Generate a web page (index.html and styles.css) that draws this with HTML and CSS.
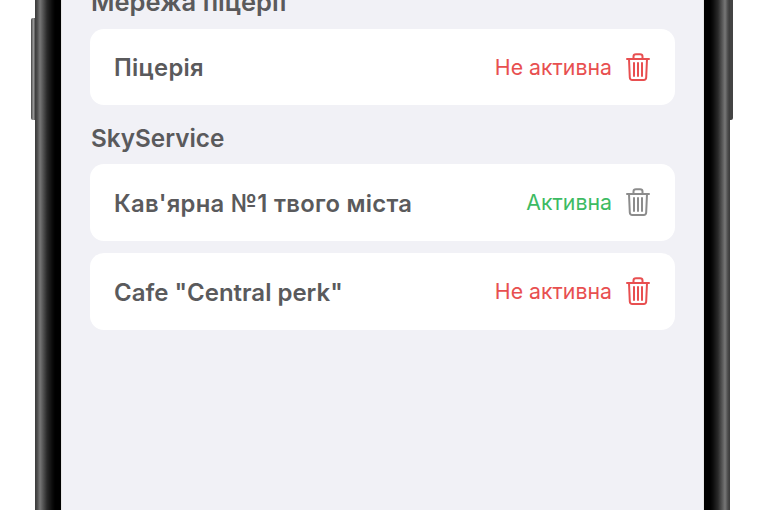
FILE: index.html
```html
<!DOCTYPE html>
<html lang="uk">
<head>
  <meta charset="UTF-8" />
  <title>Мережі</title>
  <link rel="stylesheet" href="styles.css">
</head>
<body>
  <svg width="0" height="0" class="defs">
    <symbol id="trash" viewBox="0 0 24 28">
      <path d="M1 6h22M7.500 6V3.500C7.500 2 8.500 1.200 10 1.200h4c1.500 0 2.500.8 2.500 2.300V6M3 6l.8 18.500c.1 1.500 1 2.500 2.500 2.500h11.400c1.500 0 2.400-1 2.500-2.500L21 6M8 10v13M12 10v13M16 10v13" fill="none" stroke="currentColor" stroke-width="2" stroke-linecap="round" stroke-linejoin="round"/>
    </symbol>
  </svg>

  <div class="phone">
    <span class="side-btn side-left"></span>
    <span class="side-btn side-right"></span>
    <div class="bezel bezel-left"></div>
    <main class="screen">
      <h2 class="group-title first">Мережа піцерії</h2>
      <div class="row">
        <span class="name name-cy">Піцерія</span>
        <span class="status off">Не активна</span>
        <svg class="icon off"><use href="#trash"/></svg>
      </div>

      <h2 class="group-title">SkyService</h2>
      <div class="row">
        <span class="name name-cy">Кав'ярна №1 твого міста</span>
        <span class="status on">Активна</span>
        <svg class="icon muted"><use href="#trash"/></svg>
      </div>
      <div class="row">
        <span class="name">Cafe "Central perk"</span>
        <span class="status off">Не активна</span>
        <svg class="icon off"><use href="#trash"/></svg>
      </div>
    </main>
    <div class="bezel bezel-right"></div>
  </div>
</body>
</html>
```

FILE: styles.css
```css
html, body {
  height: 100%;
}
body {
  margin: 0;
  background-color: #fff;
  font-family: Inter, "Noto Sans", sans-serif;
  overflow: hidden;
}
.defs {
  position: absolute;
}
.phone {
  position: relative;
  display: flex;
  width: 695px;
  height: 510px;
  margin-left: 35px;
}
.bezel {
  width: 26px;
  flex: none;
}
.bezel-left {
  background: linear-gradient(90deg, #3a3a3a 0, #4a4a4a 2px, #777 5px, #555 8px, #2a2a2a 12px, #0c0c0c 17px, #000 20px, #000 100%);
}
.bezel-right {
  background: linear-gradient(270deg, #3a3a3a 0, #4a4a4a 2px, #777 5px, #555 8px, #2a2a2a 12px, #0c0c0c 17px, #000 20px, #000 100%);
}
.side-btn {
  position: absolute;
  top: 18px;
  width: 4px;
  height: 102px;
  background: linear-gradient(90deg, #444, #999 60%, #555);
}
.side-left {
  left: -4px;
  border-radius: 2px 0 0 2px;
}
.side-right {
  top: -10px;
  height: 130px;
  right: -3px;
  width: 3px;
  background: #444;
  border-radius: 0 2px 2px 0;
}
.screen {
  flex: 1;
  padding: 0 28px;
  background-color: #f1f1f6;
  border-left: 1px solid #e6e6e6;
  border-right: 1px solid #e6e6e6;
  color: #5a5a5c;
}
.group-title {
  margin: 18px 0 11px 1px;
  font-size: 24.3px;
  line-height: 30px;
  font-weight: 600;
}
.group-title.first {
  margin-top: -13px;
  margin-bottom: 11.5px;
  font-size: 25.5px;
}
.row {
  display: flex;
  align-items: center;
  height: 76.5px;
  margin-bottom: 12.5px;
  padding: 0 25px 0 24px;
  background-color: #fff;
  border-radius: 14px;
}
.name {
  flex: 1;
  padding-top: 2px;
  font-size: 24px;
  font-weight: 600;
}
.name-cy {
  font-size: 23.8px;
  letter-spacing: .3px;
}
.status {
  font-size: 21.3px;
}
.on {
  color: #3dbb63;
}
.off {
  color: #e84f50;
}
.icon {
  width: 24px;
  height: 28px;
  margin-left: 14px;
}
.muted {
  color: #8c8c8c;
}
```
